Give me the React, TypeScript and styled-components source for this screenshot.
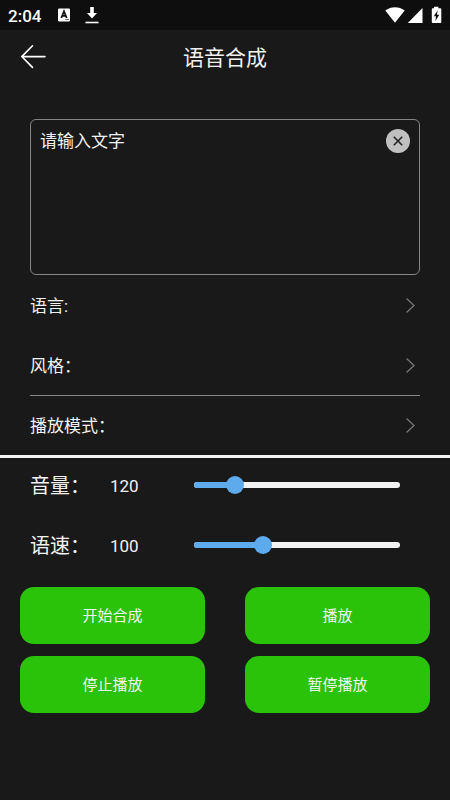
import React, { useState } from "react";
import styled, { createGlobalStyle } from "styled-components";

const GlobalStyle = createGlobalStyle`
  * { box-sizing: border-box; }
  body {
    margin: 0;
    background: #191919;
    color: #f2f2f2;
    font-family: Roboto, "Noto Sans CJK SC", sans-serif;
  }
  button, textarea, input { font: inherit; color: inherit; margin: 0; }
`;

const Page = styled.div`
  min-height: 100vh;
  display: flex;
  flex-direction: column;
`;

const StatusBar = styled.div`
  height: 30px;
  padding: 0 8px;
  display: flex;
  align-items: center;
  justify-content: space-between;
  background: #0e0e0e;
`;

const StatusGroup = styled.div`
  display: flex;
  align-items: center;
  gap: 16px;
`;

const Time = styled.span`
  font-size: 17px;
  line-height: 24px;
  font-weight: 500;
  color: #fff;
  padding-top: 2px;
`;

const Header = styled.header`
  height: 54px;
  padding: 0 20px;
  display: grid;
  grid-template-columns: 28px 1fr 28px;
  align-items: center;
`;

const IconButton = styled.button`
  display: flex;
  padding: 0;
  border: 0;
  background: none;
  cursor: pointer;
`;

const Title = styled.h1`
  margin: 0;
  padding-top: 2px;
  text-align: center;
  font-size: 21px;
  line-height: 32px;
  font-weight: 400;
`;

const Main = styled.main`
  padding-top: 35px;
`;

const TextPanel = styled.div`
  position: relative;
  margin: 0 30px;
  display: flex;
`;

const TextBox = styled.textarea`
  flex: 1;
  height: 156px;
  padding: 8px 44px 8px 9px;
  border: 1px solid #858585;
  border-radius: 6px;
  background: transparent;
  font-size: 17px;
  line-height: 26px;
  resize: none;
  outline: none;
  &::placeholder { color: #f2f2f2; opacity: 1; }
`;

const ClearButton = styled(IconButton)`
  position: absolute;
  top: 10px;
  right: 10px;
`;

const OptionRow = styled.button<{ $line?: boolean }>`
  width: calc(100% - 60px);
  height: 60px;
  margin: 0 30px;
  padding: 0 4px 0 0;
  display: flex;
  align-items: center;
  justify-content: space-between;
  border: 0;
  border-top: 1px solid ${(p) => (p.$line ? "#858585" : "transparent")};
  background: none;
  font-size: 17px;
  line-height: 26px;
  text-align: left;
  cursor: pointer;
`;

const Controls = styled.section`
  box-shadow: inset 0 3px #f4f4f4;
`;

const ControlRow = styled.div`
  height: 60px;
  padding: 0 50px 0 30px;
  display: grid;
  grid-template-columns: 80px 84px 1fr;
  align-items: center;
`;

const ControlLabel = styled.label`
  padding-top: 2px;
  font-size: 20px;
  line-height: 30px;
`;

const ControlValue = styled.output`
  padding-top: 2px;
  font-size: 17px;
  line-height: 30px;
`;

const Slider = styled.div`
  display: grid;
  align-items: center;
  & > * { grid-area: 1 / 1; }
`;

const Track = styled.div`
  height: 6px;
  border-radius: 3px;
  background: #f2f2f2;
  overflow: hidden;
`;

const Fill = styled.div`
  height: 100%;
  background: #5dabec;
`;

const Range = styled.input`
  appearance: none;
  width: calc(100% + 18px);
  height: 18px;
  margin: 0 -9px;
  background: transparent;
  cursor: pointer;
  &::-webkit-slider-thumb {
    appearance: none;
    width: 18px;
    height: 18px;
    border-radius: 50%;
    background: #5dabec;
  }
`;

const Actions = styled.div`
  padding: 12px 20px;
  display: grid;
  grid-template-columns: 1fr 1fr;
  gap: 12px 40px;
`;

const ActionButton = styled.button`
  height: 57px;
  padding: 0;
  border: 0;
  border-radius: 14px;
  background: #2ac30a;
  font-size: 15px;
  line-height: 22px;
  cursor: pointer;
`;

const Chevron = () => (
  <svg width="11" height="18" viewBox="0 0 11 18" fill="none" stroke="#777" strokeWidth="1.3" aria-hidden="true">
    <path d="M1.5 1.5L9 8.5L1.5 15.5" />
  </svg>
);

type ControlProps = {
  id: string;
  label: string;
  initial: number;
  max: number;
};

function Control({ id, label, initial, max }: ControlProps) {
  const [value, setValue] = useState(initial);
  return (
    <ControlRow>
      <ControlLabel htmlFor={id}>{label}</ControlLabel>
      <ControlValue htmlFor={id}>{value}</ControlValue>
      <Slider>
        <Track>
          <Fill style={{ width: `${(value / max) * 100}%` }} />
        </Track>
        <Range
          id={id}
          type="range"
          min={0}
          max={max}
          value={value}
          onChange={(e) => setValue(Number(e.target.value))}
        />
      </Slider>
    </ControlRow>
  );
}

const options = [
  { label: "语言:", line: false },
  { label: "风格：", line: false },
  { label: "播放模式：", line: true },
];

const actions = ["开始合成", "播放", "停止播放", "暂停播放"];

export default function App() {
  const [text, setText] = useState("");
  return (
    <Page>
      <GlobalStyle />
      <StatusBar>
        <StatusGroup>
          <Time>2:04</Time>
          <svg width="44" height="18" viewBox="0 0 44 18" aria-hidden="true">
            <rect x="1" y="2.5" width="12" height="13" rx="1.2" fill="#fff" />
            <path d="M4.3 12L7 5.2L9.7 12M5.3 9.8H8.7" fill="none" stroke="#0e0e0e" strokeWidth="1.7" />
            <path d="M8 13.6H12" stroke="#777" strokeWidth="1" />
            <path d="M33.2 1H36.8V7H40L35 12.4L30 7H33.2Z" fill="#fff" />
            <path d="M28.5 16.5H41.5" stroke="#fff" strokeWidth="1.6" />
          </svg>
        </StatusGroup>
        <svg width="57" height="18" viewBox="0 0 57 18" fill="#fff" aria-hidden="true">
          <path d="M0.3 4.6C5.8 0 14.2 0 19.7 4.6L10 16.8Z" />
          <path d="M37.5 2V17H22.8Z" />
          <path d="M49 2.2V0.7H53.4V2.2H55.3Q56.3 2.2 56.3 3.2V16Q56.3 17 55.3 17H47.8Q46.8 17 46.8 16V3.2Q46.8 2.2 47.8 2.2Z" />
          <path d="M52.6 4.5L48.8 10.2H51L50.4 15L54.3 8.8H52Z" fill="#0e0e0e" />
        </svg>
      </StatusBar>
      <Header>
        <IconButton type="button" aria-label="返回">
          <svg width="28" height="26" viewBox="0 0 28 26" fill="none" stroke="#fff" strokeWidth="1.6" strokeLinecap="round" aria-hidden="true">
            <path d="M25 12.6H1.8M12.5 1.8L1.8 12.6L12.5 23.4" />
          </svg>
        </IconButton>
        <Title>语音合成</Title>
      </Header>
      <Main>
        <TextPanel>
          <TextBox
            aria-label="请输入文字"
            placeholder="请输入文字"
            value={text}
            onChange={(e) => setText(e.target.value)}
          />
          <ClearButton type="button" aria-label="清除" onClick={() => setText("")}>
            <svg width="24" height="24" viewBox="0 0 24 24" aria-hidden="true">
              <circle cx="12" cy="12" r="12" fill="#c0c0c0" />
              <path d="M7.8 7.8L16.2 16.2M16.2 7.8L7.8 16.2" stroke="#222" strokeWidth="1.6" />
            </svg>
          </ClearButton>
        </TextPanel>
        {options.map((o) => (
          <OptionRow key={o.label} type="button" $line={o.line}>
            {o.label}
            <Chevron />
          </OptionRow>
        ))}
        <Controls>
          <Control id="volume" label="音量：" initial={120} max={600} />
          <Control id="speed" label="语速：" initial={100} max={300} />
          <Actions>
            {actions.map((a) => (
              <ActionButton key={a} type="button">
                {a}
              </ActionButton>
            ))}
          </Actions>
        </Controls>
      </Main>
    </Page>
  );
}
